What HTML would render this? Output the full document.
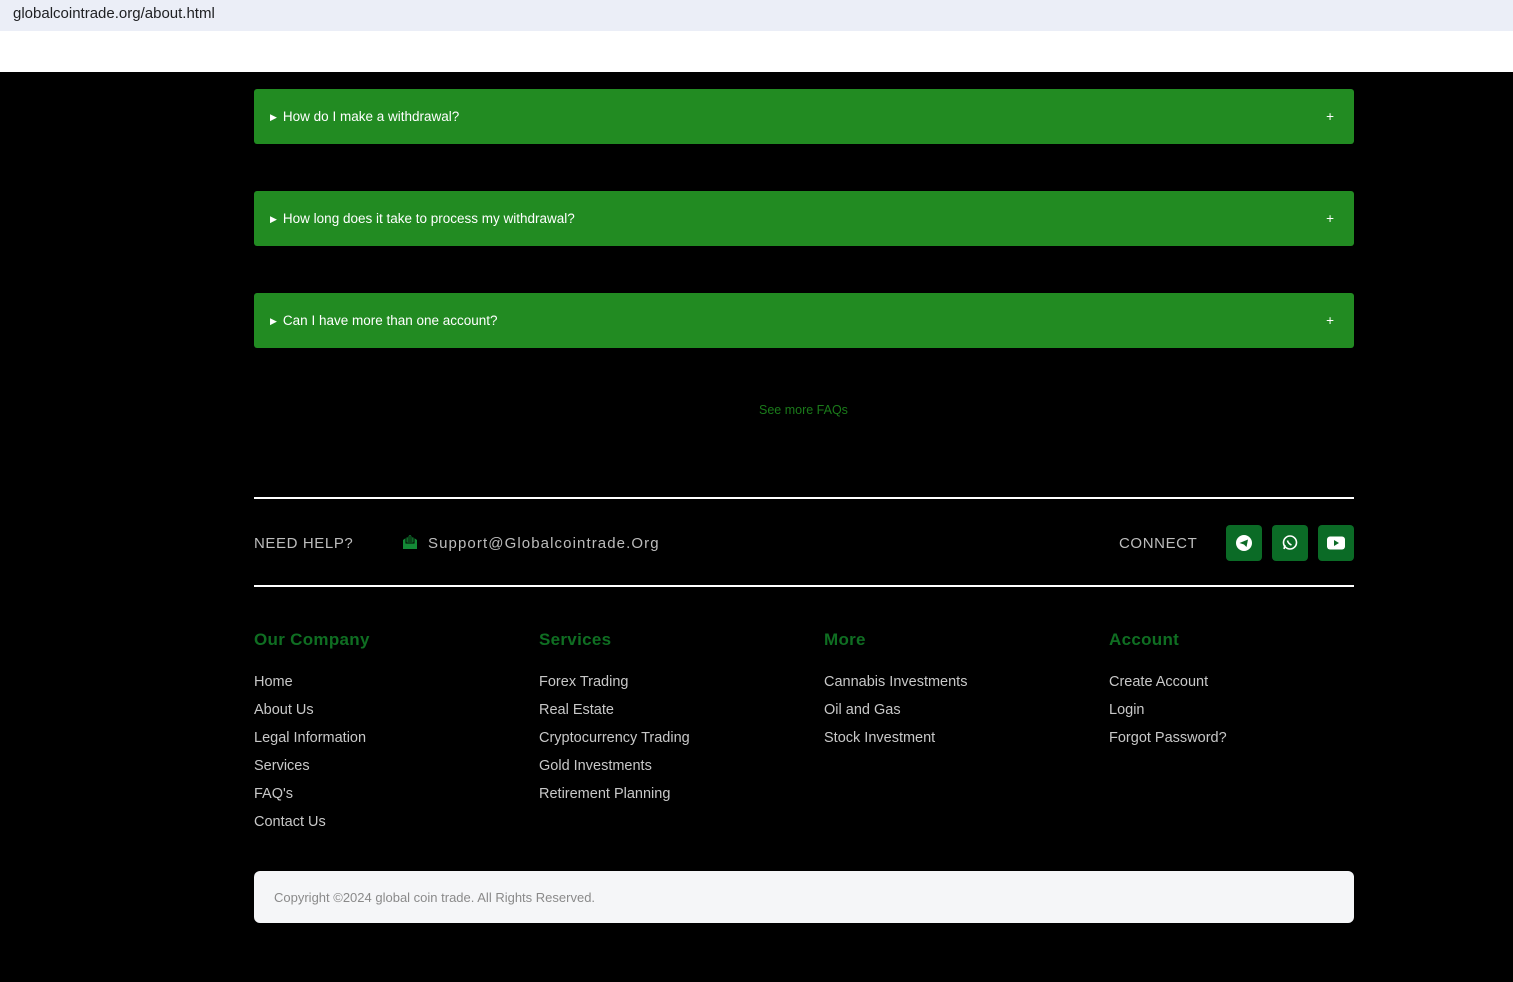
<!DOCTYPE html>
<html><head><meta charset="utf-8"><style>
*{margin:0;padding:0;box-sizing:border-box}
body{width:1513px;height:982px;background:#000;font-family:"Liberation Sans",sans-serif;position:relative;overflow:hidden}
.url{position:absolute;left:0;top:0;width:1513px;height:31px;background:#ebeef7;color:#202124;font-size:15px;line-height:28px;padding-left:13px}
.white{position:absolute;top:31px;left:0;width:1513px;height:41px;background:#fff}
.faq{position:absolute;left:254px;width:1100px;height:55px;background:#228b22;border-radius:3px;color:#fff;font-size:13.5px;line-height:56px;padding-left:16px}
.faq .p{position:absolute;right:20px;top:0}
.faq .t{font-size:9px;margin-right:6px;vertical-align:1px}
.abs{position:absolute}
.hr{position:absolute;left:254px;width:1100px;height:2px;background:#fff}
.gray{color:#bdbdbd;font-size:15px;letter-spacing:.8px}
.ib{position:absolute;top:525px;width:36px;height:36px;background:#0b6b26;border-radius:4px}
.h{position:absolute;top:630px;color:#0f6e22;font-weight:bold;font-size:17px;letter-spacing:.3px}
.col{position:absolute;top:668px;color:#c8c8c8;font-size:14.5px;line-height:28px}
.copy{position:absolute;left:254px;top:871px;width:1100px;height:52px;background:#f5f6f8;border-radius:6px;color:#8a8a8a;font-size:13px;line-height:53px;padding-left:20px}
</style></head><body>
<div class="url">globalcointrade.org/about.html</div>
<div class="white"></div>
<div class="faq" style="top:89px"><span class="t">▶</span>How do I make a withdrawal?<span class="p">+</span></div>
<div class="faq" style="top:191px"><span class="t">▶</span>How long does it take to process my withdrawal?<span class="p">+</span></div>
<div class="faq" style="top:293px"><span class="t">▶</span>Can I have more than one account?<span class="p">+</span></div>
<div class="abs" style="left:759px;top:403px;color:#1a7a1a;font-size:12.5px">See more FAQs</div>
<div class="hr" style="top:497px"></div>
<div class="abs gray" style="left:254px;top:535px;letter-spacing:.6px">NEED HELP?</div>
<svg class="abs" style="left:402px;top:533px" width="16" height="17" viewBox="0 0 16 17"><path d="M1 7 L8 2 L15 7 V16 H1Z" fill="#138a36"/><rect x="4" y="4" width="8" height="6" fill="#138a36" stroke="#000" stroke-width="1"/><path d="M5.5 6h5M5.5 8h5" stroke="#000"/></svg>
<div class="abs gray" style="left:428px;top:535px;letter-spacing:1.1px">Support@Globalcointrade.Org</div>
<div class="abs gray" style="left:1119px;top:535px;letter-spacing:.6px">CONNECT</div>
<div class="ib" style="left:1226px"><svg width="36" height="36"><circle cx="18" cy="18" r="8" fill="#fff"/><path d="M13.5 18 L22 14.5 L20.5 22 L18 19.5Z" fill="#0b6b26"/></svg></div>
<div class="ib" style="left:1272px"><svg width="36" height="36"><circle cx="18" cy="17.5" r="6.5" fill="none" stroke="#fff" stroke-width="1.6"/><path d="M12 24 L13 20" stroke="#fff" stroke-width="1.6"/><path d="M15.5 15.5 q0.5 3 4 4.5" stroke="#fff" stroke-width="1.6" fill="none"/></svg></div>
<div class="ib" style="left:1318px"><svg width="36" height="36"><rect x="9" y="11.5" width="18" height="13" rx="3" fill="#fff"/><path d="M16 15 L21 18 L16 21Z" fill="#0b6b26"/></svg></div>
<div class="hr" style="top:585px"></div>
<div class="h" style="left:254px">Our Company</div>
<div class="h" style="left:539px">Services</div>
<div class="h" style="left:824px">More</div>
<div class="h" style="left:1109px">Account</div>
<div class="col" style="left:254px">Home<br>About Us<br>Legal Information<br>Services<br>FAQ's<br>Contact Us</div>
<div class="col" style="left:539px">Forex Trading<br>Real Estate<br>Cryptocurrency Trading<br>Gold Investments<br>Retirement Planning</div>
<div class="col" style="left:824px">Cannabis Investments<br>Oil and Gas<br>Stock Investment</div>
<div class="col" style="left:1109px">Create Account<br>Login<br>Forgot Password?</div>
<div class="copy">Copyright ©2024 global coin trade. All Rights Reserved.</div>
</body></html>
